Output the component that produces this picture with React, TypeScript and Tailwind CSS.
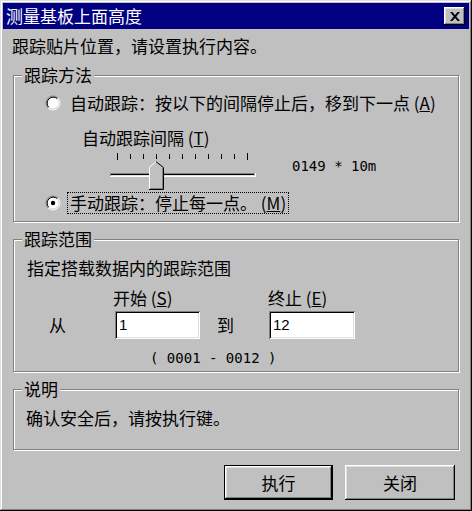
import React from "react";

const raised =
  "shadow-[inset_-1px_-1px_#000,inset_1px_1px_#fff,inset_-2px_-2px_#808080,inset_2px_2px_#dfdfdf]";
const sunken =
  "shadow-[inset_1px_1px_#808080,inset_-1px_-1px_#fff,inset_2px_2px_#000,inset_-2px_-2px_#dfdfdf]";

function Radio({ checked }: { checked?: boolean }) {
  return (
    <svg width="16" height="16" viewBox="0 0 16 16" className="shrink-0">
      <circle cx="8" cy="8" r="6" fill="#fff" />
      <path d="M3.05 12.95 A7 7 0 0 1 12.95 3.05" fill="none" stroke="#808080" strokeWidth="1" />
      <path d="M12.95 3.05 A7 7 0 0 1 3.05 12.95" fill="none" stroke="#fff" strokeWidth="1" />
      <path d="M3.76 12.24 A6 6 0 0 1 12.24 3.76" fill="none" stroke="#000" strokeWidth="1" />
      <path d="M12.24 3.76 A6 6 0 0 1 3.76 12.24" fill="none" stroke="#dfdfdf" strokeWidth="1" />
      {checked && <circle cx="8" cy="8" r="2.2" fill="#000" />}
    </svg>
  );
}

function Group({ title, className, children }: { title: string; className: string; children?: React.ReactNode }) {
  return (
    <div className={`relative border border-[#808080] shadow-[inset_1px_1px_0_#fff,1px_1px_0_#fff] ${className}`}>
      <span className="absolute left-[8px] top-[-12px] bg-[#c0c0c0] px-[2px] leading-[22px]">{title}</span>
      {children}
    </div>
  );
}

function Trackbar() {
  const ticks = Array.from({ length: 11 }, (_, i) => 9 + i * 13);
  return (
    <svg width="150" height="44" viewBox="0 0 150 44" className="shrink-0">
      {ticks.map((x, i) => (
        <rect key={x} x={x} y={i === 0 || i === 10 ? 5 : 6} width="1" height={i === 0 || i === 10 ? 7 : 5} fill="#000" />
      ))}
      <rect x="2" y="25" width="145" height="1" fill="#808080" />
      <rect x="3" y="26" width="143" height="1" fill="#000" />
      <rect x="3" y="27" width="143" height="1" fill="#dfdfdf" />
      <rect x="2" y="28" width="146" height="1" fill="#fff" />
      <rect x="2" y="25" width="1" height="3" fill="#808080" />
      <rect x="147" y="25" width="1" height="4" fill="#fff" />
      <polygon points="41,19 48,13 55,19 55,41 41,41" fill="#c0c0c0" />
      <polyline points="41.5,41 41.5,19.2 48,13.7" fill="none" stroke="#fff" strokeWidth="1" />
      <polyline points="48,13.7 55.5,19.5 55.5,41.5 41,41.5" fill="none" stroke="#000" strokeWidth="1" />
      <polyline points="54.5,20 54.5,40.5 42,40.5" fill="none" stroke="#808080" strokeWidth="1" />
    </svg>
  );
}

export default function App() {
  return (
    <div className="w-[472px] h-[511px] bg-[#c0c0c0] p-[3px] text-black text-[17px] font-['Noto_Sans_CJK_SC','Noto_Sans',sans-serif] shadow-[inset_-1px_-1px_#000,inset_1px_1px_#dfdfdf,inset_-2px_-2px_#808080,inset_2px_2px_#fff] flex flex-col">
      {/* title bar */}
      <div className="h-[26px] bg-[#000080] flex items-center justify-between pl-[3px] pr-[4px]">
        <span className="text-white text-[17px] leading-[26px]">测量基板上面高度</span>
        <div className={`w-[21px] h-[18px] bg-[#c0c0c0] flex items-center justify-center ${raised}`}>
          <svg width="10" height="9" viewBox="0 0 10 9">
            <path d="M0 0h2.4L5 3.1 7.6 0H10L6.3 4.5 10 9H7.6L5 5.9 2.4 9H0l3.7-4.5z" fill="#000" />
          </svg>
        </div>
      </div>

      <div className="flex flex-col px-[10px]">
        <div className="mt-[7px] h-[20px] leading-[20px] -ml-[1px]">跟踪贴片位置，请设置执行内容。</div>

        <Group title="跟踪方法" className="mt-[19px] h-[147px] flex flex-col">
          <div className="mt-[17px] h-[20px] flex items-center pl-[31px] gap-[9px]">
            <Radio />
            <span className="leading-[20px]">
              自动跟踪：按以下的间隔停止后，移到下一点 (<u>A</u>)
            </span>
          </div>
          <div className="mt-[15px] h-[20px] leading-[20px] pl-[68px]">
            自动跟踪间隔 (<u>T</u>)
          </div>
          <div className="h-[44px] flex items-start pl-[94px]">
            <Trackbar />
            <span className="ml-[34px] mt-[9px] font-['DejaVu_Sans_Mono',monospace] text-[14px] leading-[18px]">
              0149 * 10m
            </span>
          </div>
          <div className="h-[22px] flex items-center pl-[31px] gap-[6px]">
            <Radio checked />
            <span className="h-[22px] leading-[20px] border border-dotted border-black px-[2px]">
              手动跟踪：停止每一点。 (<u>M</u>)
            </span>
          </div>
        </Group>

        <Group title="跟踪范围" className="mt-[17px] h-[133px] flex flex-col">
          <div className="mt-[18px] h-[20px] leading-[20px] pl-[13px]">指定搭载数据内的跟踪范围</div>
          <div className="mt-[10px] h-[20px] leading-[20px] flex">
            <span className="pl-[99px] w-[254px]">
              开始 (<u>S</u>)
            </span>
            <span>
              终止 (<u>E</u>)
            </span>
          </div>
          <div className="mt-[3px] h-[28px] flex items-center">
            <span className="pl-[35px] w-[101px]">从</span>
            <div className={`w-[85px] h-[28px] bg-white pl-[4px] flex items-center text-[15px] font-['Liberation_Sans',sans-serif] ${sunken}`}>1</div>
            <span className="pl-[17px] w-[69px]">到</span>
            <div className={`w-[86px] h-[28px] bg-white pl-[4px] flex items-center text-[15px] font-['Liberation_Sans',sans-serif] ${sunken}`}>12</div>
          </div>
          <div className="mt-[9px] h-[20px] leading-[20px] pl-[136px] font-['DejaVu_Sans_Mono',monospace] text-[14px]">
            ( 0001 - 0012 )
          </div>
        </Group>

        <Group title="说明" className="mt-[17px] h-[61px] flex flex-col">
          <div className="mt-[18px] h-[20px] leading-[20px] pl-[12px]">确认安全后，请按执行键。</div>
        </Group>

        <div className="mt-[15px] h-[35px] flex justify-end gap-[12px] pr-[4px]">
          <div className="w-[109px] h-[35px] border border-black">
            <div className={`w-full h-full flex items-center justify-center ${raised}`}>执行</div>
          </div>
          <div className={`w-[110px] h-[35px] flex items-center justify-center ${raised}`}>关闭</div>
        </div>
      </div>
    </div>
  );
}
